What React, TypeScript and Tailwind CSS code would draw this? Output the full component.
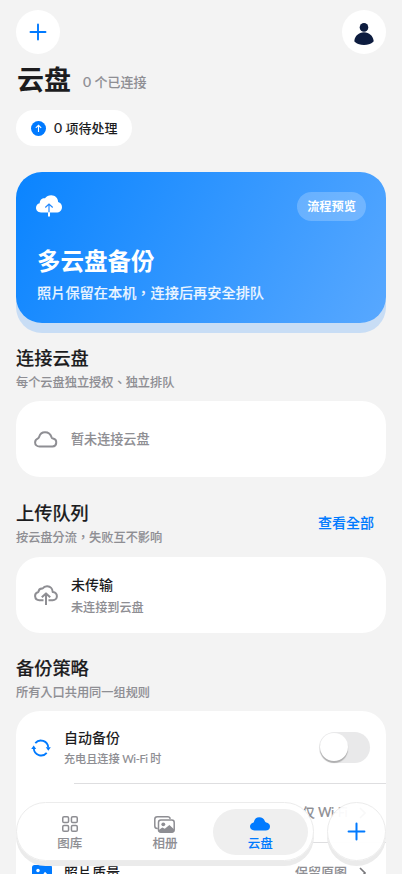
import type { ReactNode } from "react";

function PlusIcon({ size }: { size: number }) {
  return (
    <svg width={size} height={size} viewBox="0 0 18 18" fill="none" stroke="#007aff" strokeWidth="1.900" strokeLinecap="round">
      <path d="M9 1.500v15M1.500 9h15" />
    </svg>
  );
}

function UserIcon() {
  return (
    <svg width="20" height="23" viewBox="0 0 20 23" fill="#0d1c3f">
      <circle cx="10" cy="5.400" r="4.300" />
      <path d="M10 10.300c5.200 0 8.900 3.600 9.600 8.200.1.900-.1 1.300-.9 1.800-2.100 1.800-5 2.700-8.700 2.700s-6.600-.9-8.700-2.700c-.8-.5-1-.9-.9-1.800.7-4.600 4.400-8.200 9.600-8.200z" />
    </svg>
  );
}

function CloudOutline() {
  return (
    <svg width="24" height="17" viewBox="0 0 24 17" fill="none" stroke="#8e8e93" strokeWidth="2" strokeLinejoin="round">
      <path d="M5.500 15.500h13a4 4 0 0 0 .6-7.900c-.9-.2-1.200-.5-1.500-1.300C16.600 3.200 14.100 1.300 11 1.300c-2.900 0-5 1.700-5.800 4.500-.2.800-.5 1.200-1.200 1.600C2.200 8.200 1.100 9.600 1.100 11.400c0 2.400 1.900 4.100 4.400 4.100z" />
    </svg>
  );
}

function CloudUpload() {
  return (
    <svg width="24" height="20" viewBox="0 0 24 20" fill="none" stroke="#8e8e93" strokeWidth="2" strokeLinejoin="round">
      <path d="M9.500 15.200H5.300a4.200 4.200 0 0 1-.9-8.300C4.700 4.500 6.400 3.300 8.600 3.500 9.700 1.900 11.500 1.100 13.300 1.200c3 .2 5.300 2.600 5.400 5.700 2.500.3 4.200 2 4.200 4.300 0 2.300-1.800 4-4.200 4h-4.200" />
      <path d="M12 20V8.500M7.800 12.300L12 8.400l4.200 3.900" />
    </svg>
  );
}

function HeroCloud() {
  return (
    <svg width="26" height="22" viewBox="0 0 26 22" fill="none">
      <path fill="#fff" d="M5 17.500C2 17.500 0 15.400 0 12.800c0-2.300 1.500-4 3.700-4.500C3.700 5 6.200 3 9 3.300 10.400 1.300 12.600.2 15.200.2c3.900 0 6.800 2.800 6.900 6.700 2.400.7 3.900 2.600 3.900 5 0 3.200-2.300 5.600-5.600 5.600z" />
      <path d="M13 17.500V9M9.300 12.500L13 9l3.700 3.500" stroke="#2389ff" strokeWidth="1.200" />
      <path d="M13 17.300V21.500" stroke="#fff" strokeWidth="2" />
    </svg>
  );
}

function SyncIcon() {
  return (
    <svg width="20" height="18" viewBox="0 0 20 18" fill="none" stroke="#007aff" strokeWidth="1.800">
      <path d="M4.300 4.200A7.300 7.300 0 0 1 17.200 8.500M15.700 13.800A7.300 7.300 0 0 1 2.800 9.500" />
      <path d="M.2 9.900l2.500-3.400 2.500 3.400zM14.800 8.300l2.500 3.400 2.500-3.400z" fill="#007aff" stroke="none" />
    </svg>
  );
}

function GridIcon() {
  return (
    <svg width="16" height="16" viewBox="0 0 16 16" fill="none" stroke="#8e8e93" strokeWidth="1.500">
      <rect x=".75" y=".75" width="5.800" height="5.800" rx="1.300" />
      <rect x="9.450" y=".75" width="5.800" height="5.800" rx="1.300" />
      <rect x=".75" y="9.450" width="5.800" height="5.800" rx="1.300" />
      <rect x="9.450" y="9.450" width="5.800" height="5.800" rx="1.300" />
    </svg>
  );
}

function AlbumIcon() {
  return (
    <svg width="21" height="17" viewBox="0 0 21 17" fill="none" stroke="#8e8e93" strokeWidth="1.500">
      <path d="M3.800 12.500h-.5A2.500 2.500 0 0 1 .8 10V3.300A2.500 2.500 0 0 1 3.300.8h10.400c1.300 0 2.300.8 2.500 2" />
      <rect x="4.500" y="4" width="15.700" height="12.200" rx="2.400" />
      <circle cx="9.300" cy="8.300" r="1.900" fill="#8e8e93" stroke="none" />
      <path d="M4.800 14l3.500-2.600 2.500 1.400 4.600-3.900 4.600 4.300v1.600a1.400 1.400 0 0 1-1.400 1.400H6.200a1.400 1.400 0 0 1-1.400-1.400z" fill="#8e8e93" stroke="none" />
    </svg>
  );
}

function CloudSolid() {
  return (
    <svg width="20" height="14" viewBox="0 0 20 14" fill="#007aff">
      <path d="M4.400 13.500C1.800 13.500 0 11.900 0 9.600 0 7.700 1.200 6.300 3 5.800c.5-.2.700-.4.900-.9C4.700 2 6.300.3 9.200.3c2.700 0 4.900 1.500 5.700 3.900.2.700.6 1 1.300 1.300C18.700 6.100 20 7.500 20 9.500c0 2.400-1.800 4-4.400 4z" />
    </svg>
  );
}

function PhotoIcon() {
  return (
    <svg width="20" height="17" viewBox="0 0 20 17">
      <rect width="20" height="17" rx="2.500" fill="#007aff" />
      <circle cx="6" cy="5.500" r="1.700" fill="#fff" />
      <path d="M2 14l5-4.500 2.500 2L13 6.800l5 5.200v2z" fill="#fff" />
    </svg>
  );
}

function Chevron() {
  return (
    <svg width="7" height="12" viewBox="0 0 7 12" fill="none" stroke="#77777b" strokeWidth="1.600">
      <path d="M1 1l5 5-5 5" />
    </svg>
  );
}

function SectionHead({ title, desc, action }: { title: string; desc: string; action?: string }) {
  return (
    <div className="flex h-[50px] items-center justify-between pr-3">
      <div>
        <h2 className="text-[18.200px] leading-[26px] font-medium text-[#1c1c1e] [-webkit-text-stroke:0.15px]">{title}</h2>
        <p className="text-[12.200px] leading-6 font-medium text-[#8e8e93] [-webkit-text-stroke:0.1px]">{desc}</p>
      </div>
      {action && <button className="pb-[5px] text-sm font-medium text-[#007aff] [-webkit-text-stroke:0.1px]">{action}</button>}
    </div>
  );
}

function Tab({ icon, label, active }: { icon: ReactNode; label: string; active?: boolean }) {
  return (
    <button
      className={`flex h-[46px] flex-1 flex-col items-center rounded-full pt-[7px] ${
        active ? "bg-[#efefef] text-[#007aff]" : "text-[#8e8e93]"
      }`}
    >
      <span className="flex h-[17px] items-center">{icon}</span>
      <span className="mt-px text-[12.500px] leading-5 font-medium [-webkit-text-stroke:0.1px]">{label}</span>
    </button>
  );
}

export default function App() {
  return (
    <div className="relative h-[874px] w-full overflow-hidden bg-[#f3f3f3] px-4 pt-2.5 font-['Lato','Noto_Sans_CJK_TC',sans-serif] text-[#1c1c1e]">
      <header className="flex justify-between">
        <button className="flex size-11 items-center justify-center rounded-full bg-white">
          <PlusIcon size={18} />
        </button>
        <button className="flex size-11 items-center justify-center rounded-full bg-white pt-0.5">
          <UserIcon />
        </button>
      </header>

      <div className="flex h-[50px] items-center gap-3 pl-px">
        <h1 className="pt-0.5 text-[27px] leading-[50px] font-bold">云盘</h1>
        <span className="pt-[5px] text-[13px] leading-5 font-medium text-[#8e8e93] [-webkit-text-stroke:0.1px]">
          <span className="text-[14px]">0</span> 个已连接
        </span>
      </div>

      <div className="mt-1.5 flex h-9 w-[116px] items-center gap-2 rounded-full bg-white pl-[15px]">
        <svg width="15" height="15" viewBox="0 0 15 15" fill="none" stroke="#fff" strokeWidth="1.100">
          <circle cx="7.500" cy="7.500" r="7.500" fill="#007aff" stroke="none" />
          <path d="M7.500 11V4.500M4.800 6.800l2.700-2.500 2.700 2.500" />
        </svg>
        <span className="text-[13px] leading-5 font-medium">
          <span className="text-[14px]">0</span> 项待处理
        </span>
      </div>

      {/* 备份概览 */}
      <section className="mt-[26px] h-[151px] rounded-[26px] bg-linear-[118deg] from-[#0a84ff] to-[#58a8ff] pt-5 pr-5 pl-5 text-white shadow-[0_10px_0_#c8ddf5]">
        <div className="flex h-[29px] justify-between">
          <div className="pt-[3px]">
            <HeroCloud />
          </div>
          <span className="flex h-[29px] w-[69px] items-center justify-center rounded-full bg-white/22 pt-px text-[12.200px] font-bold">流程预览</span>
        </div>
        <h2 className="mt-[22px] pl-px text-[23.500px] leading-9 font-bold">多云盘备份</h2>
        <p className="mt-0.5 pl-px text-[14.200px] leading-6 font-medium text-white/90 [-webkit-text-stroke:0.1px]">照片保留在本机，连接后再安全排队</p>
      </section>

      <section className="mt-[22px]">
        <SectionHead title="连接云盘" desc="每个云盘独立授权、独立排队" />
        <div className="mt-1.5 flex h-[76px] items-center gap-[13px] rounded-[24px] bg-white pl-[18px]">
          <CloudOutline />
          <span className="pt-0.5 text-[13.100px] font-medium text-[#8e8e93] [-webkit-text-stroke:0.1px]">暂未连接云盘</span>
        </div>
      </section>

      <section className="mt-[23px]">
        <SectionHead title="上传队列" desc="按云盘分流，失败互不影响" action="查看全部" />
        <div className="mt-[7px] flex h-[76px] items-center gap-[13px] rounded-[24px] bg-white pl-[18px]">
          <CloudUpload />
          <div className="pt-[3px]">
            <p className="text-sm leading-[22px] font-medium">未传输</p>
            <p className="text-[12.100px] leading-[23px] font-medium text-[#8e8e93] [-webkit-text-stroke:0.1px]">未连接到云盘</p>
          </div>
        </div>
      </section>

      <section className="mt-[22px]">
        <SectionHead title="备份策略" desc="所有入口共用同一组规则" />
        <div className="mt-1.5 rounded-[24px] bg-white">
          <div className="flex h-[72px] items-center pr-4 pl-[15px]">
            <div className="pt-0.5">
              <SyncIcon />
            </div>
            <div className="ml-[13px] flex-1 pt-0.5">
              <p className="text-sm leading-[21px] font-medium">自动备份</p>
              <p className="text-[11.100px] leading-[21px] font-medium text-[#8e8e93] [-webkit-text-stroke:0.1px]">
                充电且连接 <span className="tracking-[-0.4px]">Wi-Fi</span> 时
              </p>
            </div>
            <div className="flex h-[31px] w-[51px] items-center rounded-full bg-[#e9e9ea] px-px">
              <div className="size-7 rounded-full bg-white shadow-[0_2px_1px_rgba(0,0,0,0.25)]" />
            </div>
          </div>
          <div className="ml-[58px] h-px bg-[#dedee0]" />
          <div className="flex h-[58px] items-center justify-end pr-5">
            <span className="mr-3 text-[13px] font-medium text-[#8e8e93] [-webkit-text-stroke:0.1px]">
              仅 <span className="tracking-[-0.6px]">Wi-Fi</span>
            </span>
            <Chevron />
          </div>
          <div className="ml-[58px] h-px bg-[#dedee0]" />
          <div className="flex h-[58px] items-center pt-px pr-5 pl-4">
            <div className="pt-0.5">
              <PhotoIcon />
            </div>
            <span className="ml-3 flex-1 text-sm font-medium">照片质量</span>
            <span className="mr-3 text-[13px] font-medium text-[#8e8e93] [-webkit-text-stroke:0.1px]">保留原图</span>
            <Chevron />
          </div>
        </div>
      </section>

      {/* 底部导航 */}
      <nav className="absolute right-4 bottom-[13px] left-4 flex justify-between">
        <div className="flex h-[59px] w-[298px] items-center rounded-full border border-[#ececec] bg-white/98 px-[5px] shadow-[0_5px_0_#ebebeb]">
          <Tab icon={<GridIcon />} label="图库" />
          <Tab icon={<AlbumIcon />} label="相册" />
          <Tab icon={<CloudSolid />} label="云盘" active />
        </div>
        <button className="flex size-[59px] items-center justify-center rounded-full border border-[#ececec] bg-white/95 shadow-[0_5px_0_#ebebeb]">
          <PlusIcon size={19} />
        </button>
      </nav>
    </div>
  );
}
